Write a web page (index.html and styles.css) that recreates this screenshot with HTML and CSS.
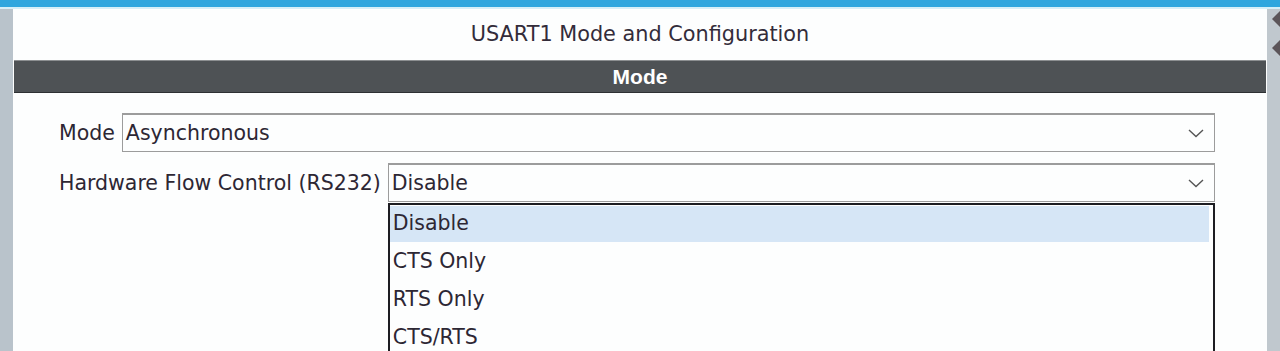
FILE: index.html
```html
<!DOCTYPE html>
<html lang="en">
<head>
  <meta charset="UTF-8">
  <title>USART1 Mode and Configuration</title>
  <link rel="stylesheet" href="styles.css">
</head>
<body>
  <div class="topbar"></div>
  <div class="frame">
    <div class="side-left"></div>
    <div class="panel">
      <h1 class="title">USART1 Mode and Configuration</h1>
      <div class="section-head">Mode</div>
      <div class="form">
        <div class="row">
          <span class="label">Mode</span>
          <div class="select">
            <span class="value">Asynchronous</span>
            <svg class="chev" width="16" height="9" viewBox="0 0 16 9"><path d="M1 1 L8 7.5 L15 1" fill="none" stroke="#555" stroke-width="1.4"/></svg>
          </div>
        </div>
        <div class="row row-flow">
          <span class="label">Hardware Flow Control (RS232)</span>
          <div class="select">
            <span class="value">Disable</span>
            <svg class="chev" width="16" height="9" viewBox="0 0 16 9"><path d="M1 1 L8 7.5 L15 1" fill="none" stroke="#555" stroke-width="1.4"/></svg>
            <ul class="popup">
              <li class="selected">Disable</li>
              <li>CTS Only</li>
              <li>RTS Only</li>
              <li>CTS/RTS</li>
            </ul>
          </div>
        </div>
      </div>
    </div>
    <div class="side-right">
      <svg width="13" height="50" viewBox="0 0 13 50"><path d="M13 2 L5 10 L13 18 Z" fill="#5c5559"/><path d="M13 31 L5 39 L13 47 Z" fill="#5c5559"/></svg>
    </div>
  </div>
</body>
</html>
```

FILE: styles.css
```css
html, body {
  margin: 0;
  height: 100%;
  overflow: hidden;
}
body {
  font-family: "DejaVu Sans", Verdana, sans-serif;
  color: #2d2734;
  background: #fdfefe;
}
.topbar {
  height: 7px;
  background: #2fa6de;
  border-bottom: 2px solid #d6eff8;
}
.frame {
  display: flex;
  height: 342px;
  overflow: hidden;
}
.side-left {
  width: 13px;
  background: #b9c3cb;
}
.side-right {
  width: 13px;
  background: #c0c8ce;
}
.side-right svg {
  display: block;
}
.panel {
  flex: 1;
  background: #fdfefe;
}
.title {
  margin: 0;
  height: 51px;
  line-height: 51px;
  font-size: 20.8px;
  font-weight: normal;
  text-align: center;
  color: #332c3a;
}
.section-head {
  margin: 0 1px;
  height: 31px;
  line-height: 32px;
  background: #4e5255;
  border-top: 1px solid #8c8f91;
  border-bottom: 1px solid #2e3133;
  color: #fff;
  text-align: center;
  font-family: "Liberation Sans", Arial, sans-serif;
  font-size: 21px;
  font-weight: bold;
}
.form {
  padding: 20px 52px 0 46px;
}
.row {
  display: flex;
  align-items: center;
  gap: 7px;
  height: 39px;
}
.row-flow {
  margin-top: 11px;
}
.label {
  font-size: 20.5px;
  white-space: nowrap;
}
.select {
  position: relative;
  flex: 1;
  height: 39px;
  box-sizing: border-box;
  border: 1px solid #9c9c9c;
  border-top: 2px solid #9c9c9c;
  background: #fdfefe;
  display: flex;
  align-items: center;
  padding-left: 3px;
  font-size: 20.5px;
}
.value {
  flex: 1;
}
.chev {
  margin-right: 10px;
}
.popup {
  position: absolute;
  left: -1px;
  right: -1px;
  top: 38px;
  margin: 0;
  padding: 1px 0 0;
  list-style: none;
  border: 2px solid #1d1d22;
  background: #fdfefe;
  height: 200px;
}
.popup li {
  height: 38px;
  line-height: 34px;
  padding-left: 3px;
  font-size: 20.5px;
}
.popup li.selected {
  height: 36px;
  margin-bottom: 2px;
  background: #d6e6f6;
  margin-right: 4px;
}
```
